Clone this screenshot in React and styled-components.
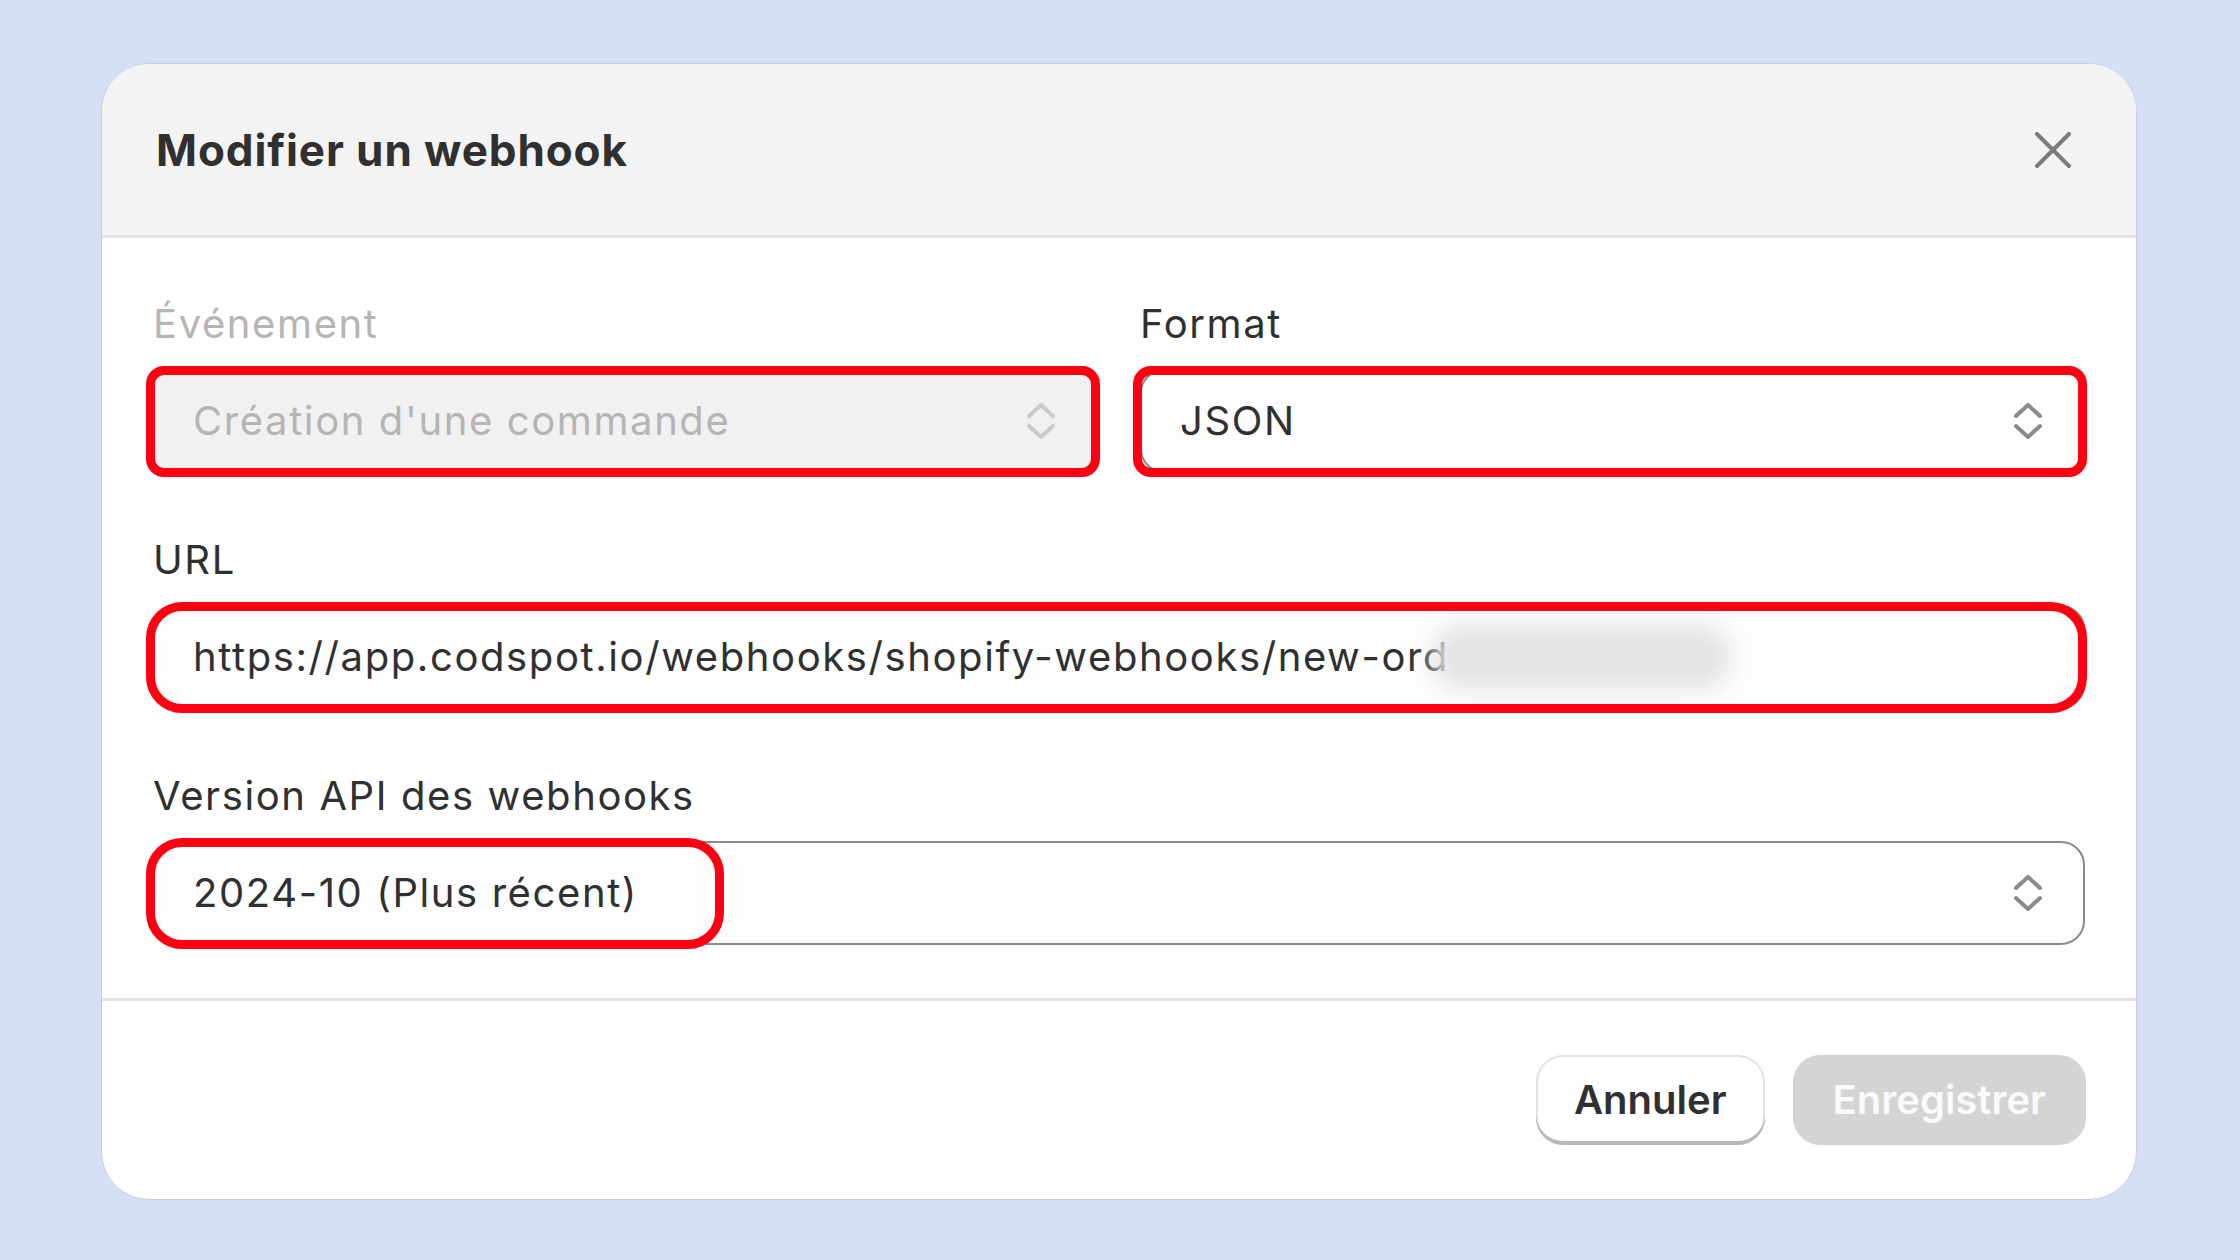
import styled, { createGlobalStyle } from "styled-components";

const GlobalStyle = createGlobalStyle`
  *,
  *::before,
  *::after {
    box-sizing: border-box;
  }

  body {
    margin: 0;
    background: #d5e0f7;
    font-family: Inter, "Noto Sans", "Liberation Sans", sans-serif;
    color: #303030;
  }
`;

const Page = styled.div`
  width: 2240px;
  height: 1260px;
  padding: 63px 103px 60px 101px;
`;

const Card = styled.section`
  width: 2036px;
  height: 1137px;
  display: flex;
  flex-direction: column;
  background: #ffffff;
  border: 1.5px solid #c4cce0;
  border-radius: 48px;
  overflow: hidden;
`;

const Header = styled.header`
  height: 174px;
  flex-shrink: 0;
  display: flex;
  align-items: center;
  justify-content: space-between;
  padding: 0 59px 0 54px;
  background: #f3f3f3;
  border-bottom: 3px solid #e3e3e3;
`;

const Title = styled.h2`
  margin: 0;
  font-size: 44px;
  font-weight: 650;
  line-height: 52px;
  letter-spacing: 0.9px;
  color: #303030;
`;

const CloseButton = styled.button`
  width: 48px;
  height: 48px;
  padding: 0;
  display: flex;
  align-items: center;
  justify-content: center;
  border: none;
  background: transparent;
  color: #7b7b7b;
  cursor: pointer;
`;

const Body = styled.div`
  display: flex;
  flex-direction: column;
  gap: 63px;
  padding: 62px 51px 53px 51px;
`;

const Row = styled.div`
  display: grid;
  grid-template-columns: 1fr 1fr;
  column-gap: 42px;
`;

const Field = styled.div`
  display: flex;
  flex-direction: column;
  min-width: 0;
`;

const Label = styled.label`
  margin-bottom: 21px;
  font-size: 40px;
  line-height: 48px;
  letter-spacing: 1.6px;
  color: ${(p) => (p.$disabled ? "#b5b5b5" : "#303030")};
`;

const Marked = styled.div`
  position: relative;

  &::after {
    content: "";
    position: absolute;
    top: -3px;
    bottom: -4px;
    left: -7px;
    ${(p) => (p.$span ? `width: ${p.$span}px;` : "right: -2px;")}
    border: 9px solid #ff0013;
    border-radius: ${(p) => p.$radius}px;
    pointer-events: none;
  }
`;

const Control = styled.div`
  height: 104px;
  display: flex;
  align-items: center;
  justify-content: space-between;
  padding: 0 40px 0 38px;
  border: 2px solid ${(p) => (p.$disabled ? "transparent" : "#8a8a8a")};
  border-radius: 24px;
  background: ${(p) => (p.$disabled ? "#f1f1f1" : "#fdfdfd")};
  color: ${(p) => (p.$disabled ? "#b5b5b5" : "#303030")};
  font-size: 40px;
  line-height: 48px;
  letter-spacing: 1.6px;
  white-space: nowrap;
  overflow: hidden;
`;

const Value = styled.span`
  display: flex;
  align-items: center;
`;

const Redacted = styled.span`
  display: inline-block;
  width: 300px;
  height: 66px;
  margin-left: -18px;
  border-radius: 33px;
  background: #e4e4e4;
  filter: blur(11px);
`;

const Footer = styled.footer`
  display: flex;
  justify-content: flex-end;
  gap: 28px;
  padding: 54px 50px 0 0;
  border-top: 3px solid #e3e3e3;
`;

const Button = styled.button`
  height: 90px;
  padding: 0 ${(p) => (p.$primary ? 40 : 38)}px;
  border: none;
  border-radius: 27px;
  font-family: inherit;
  font-size: 40px;
  font-weight: 600;
  line-height: 48px;
  cursor: pointer;
  background: ${(p) => (p.$primary ? "#d4d4d4" : "#ffffff")};
  color: ${(p) => (p.$primary ? "#fafafa" : "#303030")};
  box-shadow: ${(p) =>
    p.$primary
      ? "none"
      : "inset 0 -4px 0 #b8b8b8, inset 0 0 0 2px #e3e3e3"};
`;

function Chevrons({ color }) {
  return (
    <svg width="30" height="42" viewBox="0 0 30 42" fill="none">
      <polyline
        points="3,16 15,5 27,16"
        stroke={color}
        strokeWidth="4"
        strokeLinecap="round"
        strokeLinejoin="round"
      />
      <polyline
        points="3,26 15,37 27,26"
        stroke={color}
        strokeWidth="4"
        strokeLinecap="round"
        strokeLinejoin="round"
      />
    </svg>
  );
}

function App() {
  return (
    <>
      <GlobalStyle />
      <Page>
        <Card>
          <Header>
            <Title>Modifier un webhook</Title>
            <CloseButton aria-label="Fermer">
              <svg width="36" height="36" viewBox="0 0 36 36" fill="none">
                <path
                  d="M2 2L34 34M34 2L2 34"
                  stroke="currentColor"
                  strokeWidth="4"
                  strokeLinecap="round"
                />
              </svg>
            </CloseButton>
          </Header>

          <Body>
            <Row>
              <Field>
                <Label $disabled>Événement</Label>
                <Marked $radius={18}>
                  <Control $disabled>
                    <Value>Création d'une commande</Value>
                    <Chevrons color="#c9c9c9" />
                  </Control>
                </Marked>
              </Field>
              <Field>
                <Label>Format</Label>
                <Marked $radius={18}>
                  <Control>
                    <Value>JSON</Value>
                    <Chevrons color="#8a8a8a" />
                  </Control>
                </Marked>
              </Field>
            </Row>

            <Field>
              <Label>URL</Label>
              <Marked $radius={36}>
                <Control>
                  <Value>
                    https://app.codspot.io/webhooks/shopify-webhooks/new-ord
                    <Redacted />
                  </Value>
                </Control>
              </Marked>
            </Field>

            <Field>
              <Label>Version API des webhooks</Label>
              <Marked $radius={36} $span={578}>
                <Control>
                  <Value>2024-10 (Plus récent)</Value>
                  <Chevrons color="#8a8a8a" />
                </Control>
              </Marked>
            </Field>
          </Body>

          <Footer>
            <Button>Annuler</Button>
            <Button $primary>Enregistrer</Button>
          </Footer>
        </Card>
      </Page>
    </>
  );
}

export default App;
